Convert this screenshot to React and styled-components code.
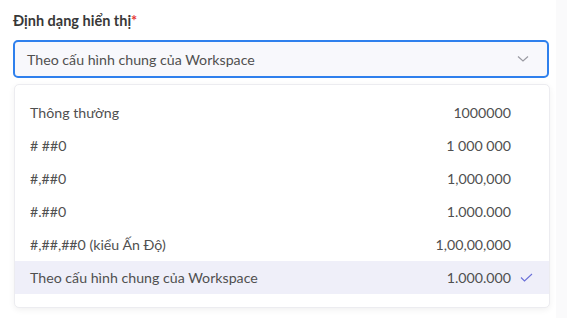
import React from "react";
import styled, { createGlobalStyle } from "styled-components";

const Global = createGlobalStyle`
  html, body { margin: 0; padding: 0; background: #fafafb; }
  body { font-family: Lato, "Noto Sans", sans-serif; }
`;

const Page = styled.div`
  width: 556px;
  height: 318px;
  background: #ffffff;
  box-sizing: border-box;
  padding: 11px 0 0 13px;
`;

const Label = styled.div`
  font-size: 14.5px;
  font-weight: 700;
  color: #383838;
  line-height: 20px;
  height: 20px;
  & span { color: #e53935; }
`;

const Field = styled.div`
  position: relative;
  margin-top: 9px;
  width: 536px;
`;

const Select = styled.div`
  box-sizing: border-box;
  height: 38px;
  border: 2px solid #2f80ed;
  border-radius: 5px;
  background: #f8f8fc;
  display: flex;
  align-items: center;
  justify-content: space-between;
  padding: 0 18px 0 12px;
  font-size: 14.2px;
  color: #505050;
`;

const Menu = styled.div`
  position: absolute;
  top: 44px;
  left: 1px;
  width: 536px;
  box-sizing: border-box;
  background: #fff;
  border: 1px solid #ececf0;
  border-radius: 5px;
  box-shadow: 0 2px 6px rgba(0, 0, 0, 0.06);
  padding: 11px 0 13px;
`;

const Row = styled.div`
  height: 33px;
  display: flex;
  align-items: center;
  padding: 0 16px 0 15px;
  font-size: 14.2px;
  color: #505050;
  background: ${(p) => (p.$active ? "#efeff9" : "transparent")};
`;

const Name = styled.div`
  flex: 1;
`;

const Value = styled.div`
  text-align: right;
`;

const Check = styled.div`
  width: 14px;
  margin-left: 8px;
  display: flex;
  align-items: center;
  justify-content: center;
`;

const items = [
  ["Thông thường", "1000000"],
  ["# ##0", "1 000 000"],
  ["#,##0", "1,000,000"],
  ["#.##0", "1.000.000"],
  ["#,##,##0 (kiểu Ấn Độ)", "1,00,00,000"],
  ["Theo cấu hình chung của Workspace", "1.000.000", true],
];

export default function App() {
  return (
    <>
      <Global />
      <Page>
        <Label>
          Định dạng hiển thị<span>*</span>
        </Label>
        <Field>
          <Select>
            <span>Theo cấu hình chung của Workspace</span>
            <svg width="12" height="8" viewBox="0 0 12 8">
              <path d="M1 1.5 L6 6 L11 1.5" fill="none" stroke="#9a9aa2" strokeWidth="1.2" />
            </svg>
          </Select>
          <Menu>
            {items.map(([n, v, a]) => (
              <Row key={n} $active={a}>
                <Name>{n}</Name>
                <Value>{v}</Value>
                <Check>
                  {a && (
                    <svg width="13" height="9" viewBox="0 0 13 9">
                      <path d="M1 4.5 L4.5 8 L12 1" fill="none" stroke="#6a70d8" strokeWidth="1.1" />
                    </svg>
                  )}
                </Check>
              </Row>
            ))}
          </Menu>
        </Field>
      </Page>
    </>
  );
}
